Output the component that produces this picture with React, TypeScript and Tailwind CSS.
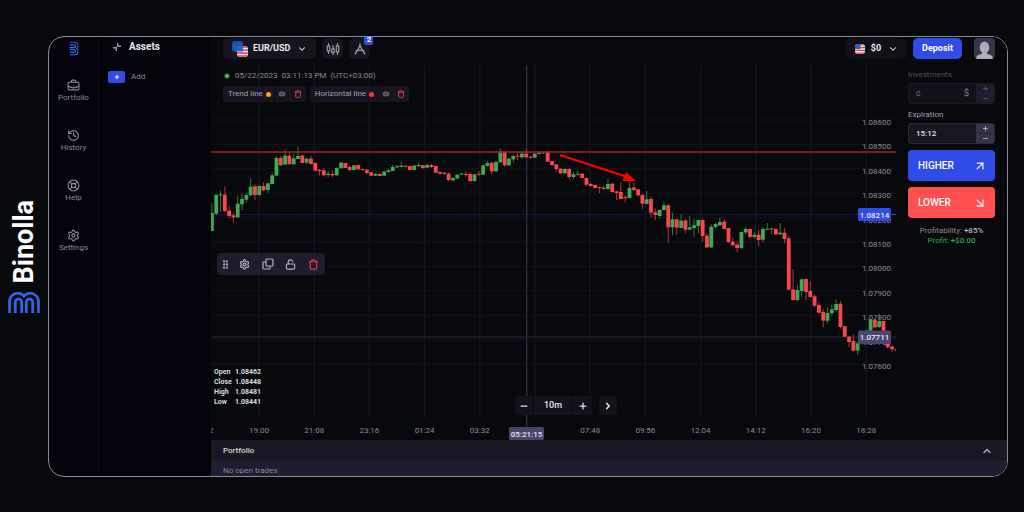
import { useState } from "react";
import {
  ArrowDownRight,
  ArrowUpRight,
  BriefcaseBusiness,
  ChevronDown,
  ChevronRight,
  ChevronUp,
  GripVertical,
  History,
  LifeBuoy,
  LockOpen,
  Minus,
  Plus,
  Settings,
  Trash,
} from "lucide-react";

type Bar = [open: number, close: number, high: number, low: number];

// Bars are stored per session as distances down from the session's own level,
// in thirds of a chart unit. A bar that closes further down than it opened is red.
const sessions: { level: number; bars: Bar[] }[] = [
  {
    level: 195,
    bars: [
      [303, 249, 220, 303], [251, 195, 190, 256], [196, 193, 182, 246], [194, 243, 169, 246],
      [242, 258, 228, 265], [256, 262, 250, 278], [262, 221, 197, 262], [223, 207, 190, 240],
      [209, 195, 190, 218], [196, 170, 146, 196], [169, 195, 163, 211], [195, 168, 166, 197],
      [168, 181, 157, 183], [180, 160, 158, 188], [162, 136, 128, 162], [137, 84, 80, 137],
      [84, 106, 78, 107], [104, 77, 58, 104], [77, 103, 64, 103], [103, 85, 72, 103],
      [87, 78, 49, 87], [76, 99, 76, 99], [98, 86, 84, 103], [86, 102, 78, 103],
      [99, 122, 97, 122], [119, 123, 118, 137], [121, 136, 113, 139], [135, 131, 122, 142],
      [132, 136, 121, 142], [136, 114, 112, 137], [115, 98, 96, 115], [99, 114, 98, 114],
      [111, 120, 107, 124], [120, 106, 104, 121], [105, 118, 103, 121], [117, 120, 116, 122],
      [119, 129, 118, 133], [127, 137, 126, 139], [137, 132, 130, 138], [132, 138, 130, 139],
      [137, 125, 122, 138], [126, 121, 116, 127], [123, 111, 104, 123], [112, 109, 104, 114],
      [111, 107, 95, 112],
    ],
  },
  {
    level: 225,
    bars: [
      [77, 80, 76, 82], [78, 90, 77, 92], [90, 77, 73, 91], [79, 75, 68, 80],
      [76, 84, 74, 87], [83, 75, 71, 84], [75, 81, 71, 84], [78, 98, 77, 99],
      [96, 101, 94, 103], [98, 102, 97, 104], [101, 120, 98, 123], [121, 114, 112, 124],
      [115, 104, 103, 119], [104, 101, 98, 105], [102, 105, 93, 110], [102, 123, 98, 125],
      [123, 103, 101, 124], [101, 104, 93, 108], [104, 76, 74, 105], [78, 69, 63, 79],
      [68, 94, 67, 102], [94, 66, 62, 96], [67, 35, 27, 67], [36, 76, 35, 81],
      [76, 56, 52, 77], [58, 48, 43, 68], [47, 50, 36, 60], [52, 41, 36, 55],
      [41, 52, 28, 53], [50, 53, 48, 57], [53, 41, 39, 54], [42, 38, 33, 43],
      [40, 37, 35, 42], [37, 65, 36, 65], [63, 75, 62, 78], [73, 87, 72, 97],
      [86, 100, 85, 102], [100, 87, 84, 101], [87, 111, 85, 119], [111, 103, 96, 117],
      [104, 101, 92, 108], [101, 114, 99, 115], [114, 134, 113, 137], [132, 138, 128, 140],
      [135, 144, 133, 145], [141, 144, 140, 160], [143, 147, 138, 149], [147, 132, 117, 149],
      [131, 156, 129, 158], [154, 159, 152, 181], [156, 177, 126, 178], [171, 174, 165, 188],
      [174, 144, 128, 175], [142, 150, 128, 152], [148, 166, 147, 170], [165, 191, 163, 207],
      [192, 178, 153, 193], [177, 218, 170, 231], [217, 225, 205, 240], [228, 210, 208, 235],
      [210, 196, 186, 212], [196, 262, 192, 310], [262, 238, 218, 286], [238, 263, 236, 284],
      [264, 242, 222, 264], [241, 269, 238, 280], [269, 262, 228, 270], [264, 256, 235, 290],
      [258, 240, 239, 280], [240, 288, 236, 306], [287, 322, 278, 324], [322, 260, 253, 324],
      [261, 252, 248, 265],
    ],
  },
  {
    level: 405,
    bars: [
      [76, 66, 53, 78], [65, 87, 58, 88], [84, 126, 83, 128], [125, 136, 113, 138],
      [134, 144, 124, 157], [144, 96, 95, 147], [97, 87, 81, 102], [87, 111, 85, 116],
      [111, 104, 96, 116], [104, 120, 90, 138], [119, 87, 82, 127], [89, 86, 69, 90],
      [85, 88, 84, 103], [87, 103, 85, 106], [103, 98, 69, 105], [98, 117, 84, 130],
      [115, 269, 108, 270], [268, 300, 207, 302], [300, 270, 254, 304], [273, 238, 236, 290],
      [237, 276, 236, 300], [273, 291, 243, 293], [289, 317, 283, 320], [315, 338, 305, 340],
      [336, 362, 328, 382], [362, 339, 322, 370], [340, 328, 314, 347], [330, 312, 298, 335],
      [311, 381, 303, 386], [379, 410, 377, 412], [410, 426, 408, 440], [423, 452, 403, 455],
      [452, 430, 424, 466], [432, 425, 420, 434], [430, 392, 388, 432], [392, 359, 356, 394],
      [359, 382, 355, 385], [381, 363, 340, 384], [363, 400, 362, 402], [400, 442, 398, 446],
      [440, 448, 436, 455], [448, 452, 446, 456],
    ],
  },
];

const candles = sessions.flatMap(({ level, bars }) =>
  bars.map((bar) => bar.map((v) => (v + level) / 3))
);

const prices = [
  "1.08600", "1.08500", "1.08400", "1.08300", "1.08200", "1.08100",
  "1.08000", "1.07900", "1.07800", "1.07700", "1.07600",
];

const times = [
  "16:52", "19:00", "21:08", "23:16", "01:24", "03:32", "", "07:48",
  "09:56", "12:04", "14:12", "16:20", "18:28",
];

const navItems = [
  { label: "Portfolio", icon: BriefcaseBusiness },
  { label: "History", icon: History },
  { label: "Help", icon: LifeBuoy },
  { label: "Settings", icon: Settings },
];

const drawings = [
  { label: "Trend line", dot: "bg-[#ff9f0a]" },
  { label: "Horizontal line", dot: "bg-[#ff3347]" },
];

const ohlc = [
  ["Open", "1.08462"],
  ["Close", "1.08448"],
  ["High", "1.08481"],
  ["Low", "1.08441"],
];

function Logo({ className }: { className: string }) {
  return (
    <svg viewBox="0 0 32 21" className={className} fill="none" stroke="#2b68ea" strokeWidth="2.700">
      <path d="M1.500 21V10C1.500 1.500 11.500-1.500 16 4.200C20.500-1.500 30.500 1.500 30.500 10V21" />
      <path d="M7.300 21V10.500a3.200 3.500 0 0 1 6.400 0V21" />
      <path d="M18.300 21V10.500a3.200 3.500 0 0 1 6.400 0V21" />
    </svg>
  );
}

function UsFlag({ className }: { className: string }) {
  return (
    <svg viewBox="0 0 12 12" className={className}>
      <rect width="12" height="12" fill="#f1f1f4" />
      <path d="M0 1h12M0 4.300h12M0 7.600h12M0 10.900h12" stroke="#e0394a" strokeWidth="1.700" />
      <rect width="6.500" height="6" fill="#2b5fc4" />
    </svg>
  );
}

function EuFlag({ className }: { className: string }) {
  return (
    <svg viewBox="0 0 12 12" className={className}>
      <rect width="12" height="12" fill="#0b56b3" />
      <circle cx="6" cy="6" r="3.200" fill="none" stroke="#5d8a7d" strokeDasharray="1 1" />
    </svg>
  );
}

function CollapseIcon() {
  return (
    <svg viewBox="0 0 10 10" className="size-2.5" fill="none" stroke="#9a99a8" strokeWidth="1.400">
      <path d="M1 5.700h3.300V9M9 4.300H5.700V1" />
    </svg>
  );
}

function CandlesIcon() {
  return (
    <svg viewBox="0 0 14 14" className="size-3.5" fill="none" stroke="#a3a2ae" strokeWidth="1.100">
      <path d="M2.500 1v3M2.500 9v3M7 3v4M7 10.500V13M11.500 1v3M11.500 10v3" />
      <rect x="1.300" y="4" width="2.400" height="5" />
      <rect x="5.800" y="7" width="2.400" height="3.500" />
      <rect x="10.300" y="4" width="2.400" height="6" />
    </svg>
  );
}

function CompassIcon() {
  return (
    <svg viewBox="0 0 14 14" className="size-3.5" fill="none" stroke="#a3a2ae" strokeWidth="1.300">
      <path d="M7 1.500v2M7 3.500L5.500 6.500L2 12.500M7 3.500L8.500 6.500L12 12.500" />
      <path d="M2.500 9.500c1.500-1.800 7.500-1.800 9 0" />
    </svg>
  );
}

function EyeIcon() {
  return (
    <svg viewBox="0 0 8 8" className="size-2">
      <ellipse cx="4" cy="4" rx="3.500" ry="2.500" fill="#5b5a69" />
      <circle cx="4" cy="4" r="1" fill="#33323f" />
    </svg>
  );
}

function DuplicateIcon() {
  return (
    <svg viewBox="0 0 12 12" className="size-3" fill="none" stroke="currentColor" strokeWidth="1.200">
      <rect x="4" y="1" width="7" height="7" rx="1" />
      <path d="M4 4H1.800a.8.8 0 0 0-.8.8v5.400a.8.8 0 0 0 .8.8h5.400a.8.8 0 0 0 .8-.8V8" />
    </svg>
  );
}

function Chart() {
  return (
    <svg viewBox="0 0 685 375" className="block h-full w-full font-['Roboto',sans-serif]">
      {prices.map((price, i) => (
        <path key={price} d={`M0 ${55 + i * 24.4}H685`} stroke="#12131e" />
      ))}
      {times.map((time, i) => (
        <path key={i} d={`M${i * 55.2 - 7.2} 0V353`} stroke="#13141f" strokeWidth="1.500" />
      ))}
      <path d="M0 149.500H685" stroke="#18225e" strokeDasharray="1.500 1" />
      <path d="M315.700 0V362" stroke="#2c2a42" strokeWidth="1.500" />
      <path d="M0 272H685" stroke="#2b2a42" />

      {prices.map((price, i) => (
        <text key={price} x="680" y={60 + i * 24.4} textAnchor="end" fontSize="8" fill="#8b8a96">
          {price}
        </text>
      ))}

      {candles.map(([open, close, high, low], i) => {
        const x = 0.9 + i * 4.305;
        const color = close > open ? "#fb464c" : "#41a855";
        return (
          <g key={i} fill={color}>
            <rect x={x - 0.5} y={high} width="1" height={low - high} opacity="0.7" />
            <rect x={x - 1.9} y={Math.min(open, close)} width="3.800" height={Math.abs(open - close)} />
          </g>
        );
      })}

      <path d="M0 87H685" stroke="#a81f2c" strokeWidth="1.800" opacity="0.75" />
      <path d="M349 90L415 111.500" stroke="#ff0000" strokeWidth="2" />
      <path d="M425 116L411.500 116L415 107Z" fill="#ff0000" />

      {times.map((time, i) => (
        <text key={i} x={i * 55.2 - 7.2} y="368" textAnchor="middle" fontSize="8" fill="#8b8a96">
          {time}
        </text>
      ))}

      <g fontSize="8" fontWeight="500" fill="#e9e9f0" textAnchor="middle">
        <path d="M680 149.500H685" stroke="#2f4be8" />
        <rect x="647" y="143" width="33" height="13" rx="1.500" fill="#2f4be8" />
        <text x="663.500" y="152.500">1.08214</text>
        <rect x="647" y="265.500" width="33" height="13.500" rx="1.500" fill="#48466a" />
        <text x="663.500" y="275">1.07711</text>
        <rect x="298" y="362" width="35" height="13" rx="1.500" fill="#48466a" />
        <text x="315.500" y="371.500">05:21:15</text>
      </g>
    </svg>
  );
}

function Stepper({ muted }: { muted?: boolean }) {
  return (
    <div className={`flex w-[18px] flex-col ${muted ? "bg-[#1d1c2b] text-[#55546a]" : "bg-[#35344a] text-[#b4b3c2]"}`}>
      <button aria-label="Increase" className="flex flex-1 items-center justify-center border-b border-[#262536]">
        <Plus className="size-[7px]" strokeWidth={3} />
      </button>
      <button aria-label="Decrease" className="flex flex-1 items-center justify-center">
        <Minus className="size-[7px]" strokeWidth={3} />
      </button>
    </div>
  );
}

function TradePanel() {
  const [amount, setAmount] = useState("0");
  const [expiration, setExpiration] = useState("15:12");

  return (
    <aside className="w-[111px] shrink-0 px-3 pt-[5px]">
      <label htmlFor="investments" className="block leading-[10px] text-[#54535f]">
        Investments
      </label>
      <div className="mt-[3px] flex h-[21px] overflow-hidden rounded-[3px] border border-[#1b1a27] bg-[#12121b]">
        <input
          id="investments"
          value={amount}
          onChange={(e) => setAmount(e.target.value)}
          className="w-0 min-w-0 flex-1 bg-transparent pl-[7px] text-[#777683] outline-none"
        />
        <span className="mr-[7px] self-center text-[9px] text-[#8b8a96]">$</span>
        <Stepper muted />
      </div>

      <label htmlFor="expiration" className="mt-1.5 block leading-[10px] text-[#a3a2ad]">
        Expiration
      </label>
      <div className="mt-[3px] flex h-[21px] overflow-hidden rounded-[3px] border border-[#2a293a] bg-[#181722]">
        <input
          id="expiration"
          value={expiration}
          onChange={(e) => setExpiration(e.target.value)}
          className="w-0 min-w-0 flex-1 bg-transparent pl-[7px] font-medium text-[#e4e4ea] outline-none"
        />
        <Stepper />
      </div>

      <button className="mt-1.5 flex h-[31px] w-full items-center justify-between rounded bg-[#2f4be8] px-2.5 text-[10px] font-medium text-white">
        HIGHER
        <ArrowUpRight className="-mr-0.5 size-3.5" />
      </button>
      <button className="mt-1.5 flex h-[31px] w-full items-center justify-between rounded bg-[#ff4f4f] px-2.5 text-[10px] font-medium text-white">
        LOWER
        <ArrowDownRight className="-mr-0.5 size-3.5" />
      </button>

      <div className="mt-2 text-center leading-[10px] whitespace-nowrap">
        <p className="text-[#8b8a96]">
          Profitability: <span className="font-medium text-[#b9b8c4]">+85%</span>
        </p>
        <p className="text-[#2fa844]">
          Profit: <span className="font-medium">+$0.00</span>
        </p>
      </div>
    </aside>
  );
}

export default function App() {
  const [step, setStep] = useState(10);

  return (
    <div className="flex min-h-screen bg-[#08090d] pt-9 pr-4 pb-[35px] font-['Roboto',sans-serif] text-[8px] text-[#8b8a96]">
      <div className="flex w-12 shrink-0 flex-col items-center justify-center gap-2">
        <span className="rotate-180 text-[27px] leading-8 font-bold text-white [writing-mode:vertical-rl]">
          Binolla
        </span>
        <Logo className="w-8" />
      </div>

      <div className="flex min-w-0 flex-1 overflow-hidden rounded-2xl border border-[#8a8a90] bg-[#03040b]">
        <nav className="flex w-[50px] shrink-0 flex-col items-center border-r border-[#0b0c15]">
          <a href="#home" aria-label="Home" className="flex h-[42px] items-start pt-[7px]">
            <Logo className="w-3.5 rotate-90" />
          </a>
          {navItems.map((item) => (
            <a key={item.label} href={`#${item.label.toLowerCase()}`} className="flex h-[50px] flex-col items-center">
              <item.icon className="size-[13px]" strokeWidth={2} />
              <span className="leading-3">{item.label}</span>
            </a>
          ))}
        </nav>

        <section className="w-28 shrink-0 pt-1">
          <div className="flex items-center gap-[7px] pl-[13px]">
            <CollapseIcon />
            <h2 className="text-[10px] leading-3 font-bold text-[#e9e9ee]">Assets</h2>
          </div>
          <div className="mt-[18px] flex items-center gap-1.5 pl-[9px]">
            <button aria-label="Add asset" className="flex h-3 w-[17px] items-center justify-center rounded-[2px] bg-[#2f4be8] text-white">
              <Plus className="size-1.5" strokeWidth={4} />
            </button>
            <span>Add</span>
          </div>
        </section>

        <main className="flex min-w-0 flex-1 flex-col bg-[#08090d]">
          <header className="flex h-7 items-start justify-between pt-px pr-3 pl-3">
            <div className="flex gap-1.5">
              <button className="flex h-[21px] items-center rounded-[5px] bg-[#15141f] px-[9px] text-[9px] font-bold text-[#ececf1]">
                <span className="relative mr-[5px] size-4">
                  <EuFlag className="size-[11px] rounded-[3px]" />
                  <UsFlag className="absolute right-0 bottom-0 size-[11px] rounded-[3px]" />
                </span>
                EUR/USD
                <ChevronDown className="ml-[7px] size-2.5" strokeWidth={2.5} />
              </button>
              <button aria-label="Chart type" className="flex size-[21px] items-center justify-center rounded-[5px] bg-[#15141f]">
                <CandlesIcon />
              </button>
              <button aria-label="Drawing tools" className="relative flex size-[21px] items-center justify-center rounded-[5px] bg-[#15141f]">
                <CompassIcon />
                <span className="absolute -top-1 -right-[3px] h-[11px] w-[9px] rounded-[2px] bg-[#2f4be8] leading-[11px] font-bold text-white">
                  2
                </span>
              </button>
            </div>
            <div className="flex gap-1.5">
              <button className="flex h-[21px] items-center rounded-[5px] bg-[#111119] px-[9px] text-[9px] font-bold text-[#ececf1]">
                <UsFlag className="mr-1.5 size-2.5 rounded-[3px]" />
                $0
                <ChevronDown className="ml-[7px] size-2.5" strokeWidth={2.5} />
              </button>
              <button className="h-[21px] rounded-[5px] bg-[#2f4be8] px-[9px] text-[9px] font-bold text-white">
                Deposit
              </button>
              <button aria-label="Profile" className="ml-1.5 size-[21px] overflow-hidden rounded-[4px] bg-[#35344a]">
                <svg viewBox="0 0 21 21" className="size-full" fill="#adacb9">
                  <ellipse cx="10.500" cy="9.500" rx="4.800" ry="6" />
                  <path d="M8 13h5v3c4 .600 6 2 6 5H2c0-3 2-4.400 6-5z" />
                </svg>
              </button>
            </div>
          </header>

          <div className="flex flex-1">
            <div className="relative min-w-0 flex-1">
              <Chart />

              <div className="absolute top-[5px] left-3">
                <p className="flex items-center gap-[5px] pl-px leading-3 text-[#8b8a96]">
                  <span className="size-1.5 rounded-full border border-[#123d1c] bg-[#4cc764]" />
                  05/22/2023&nbsp; 03:11:13 PM &nbsp;(UTC+03:00)
                </p>
                <div className="mt-1 flex gap-1">
                  {drawings.map((item) => (
                    <div key={item.label} className="flex h-4 items-center rounded-[3px] bg-[#161520]">
                      <span className="flex items-center gap-[3px] pr-[3px] pl-[5px] text-[#a3a2ad]">
                        {item.label}
                        <span className={`size-[5px] rounded-full ${item.dot}`} />
                      </span>
                      <button aria-label="Hide" className="flex h-full w-4 items-center justify-center border-l border-[#0c0c13]">
                        <EyeIcon />
                      </button>
                      <button aria-label="Remove" className="flex h-full w-4 items-center justify-center text-[#d83a45]">
                        <Trash className="size-2" strokeWidth={3} />
                      </button>
                    </div>
                  ))}
                </div>
              </div>

              <div className="absolute top-[188px] left-1.5 flex h-[22px] items-center rounded bg-[#1e1d2e] text-[#b4b3be]">
                <span className="flex w-4 justify-center">
                  <GripVertical className="size-[11px]" strokeWidth={3} />
                </span>
                <button aria-label="Drawing settings" className="flex w-[23px] justify-center">
                  <Settings className="size-[11px]" strokeWidth={2.5} />
                </button>
                <button aria-label="Duplicate" className="flex w-[23px] justify-center">
                  <DuplicateIcon />
                </button>
                <button aria-label="Unlock" className="flex w-[23px] justify-center">
                  <LockOpen className="size-[11px]" strokeWidth={2.5} />
                </button>
                <button aria-label="Delete" className="flex w-[23px] justify-center text-[#d83a45]">
                  <Trash className="size-[11px]" strokeWidth={2.5} />
                </button>
              </div>

              <table className="absolute bottom-[33px] left-[3px] text-[7px] leading-[10px] font-bold text-[#d9d9df]">
                <tbody>
                  {ohlc.map(([label, value]) => (
                    <tr key={label}>
                      <th className="w-[21px] p-0 text-left">{label}</th>
                      <td className="p-0">{value}</td>
                    </tr>
                  ))}
                </tbody>
              </table>

              <div className="absolute bottom-[25px] left-[304px] flex h-[19px] gap-px text-[#e4e4ea]">
                <button aria-label="Zoom out" onClick={() => setStep(Math.max(1, step - 5))} className="flex w-[18px] items-center justify-center rounded-l bg-[#14131d]">
                  <Minus className="size-2.5" strokeWidth={3} />
                </button>
                <span className="flex w-[38px] items-center justify-center bg-[#14131d] text-[9px] font-medium">
                  {step}m
                </span>
                <button aria-label="Zoom in" onClick={() => setStep(step + 5)} className="flex w-[19px] items-center justify-center rounded-r bg-[#14131d]">
                  <Plus className="size-2.5" strokeWidth={3} />
                </button>
                <button aria-label="Latest" className="ml-1.5 flex w-[18px] items-center justify-center rounded bg-[#14131d]">
                  <ChevronRight className="size-2.5" strokeWidth={4} />
                </button>
              </div>
            </div>

            <TradePanel />
          </div>

          <section className="h-9 shrink-0 overflow-hidden bg-[#1e1d31]">
            <div className="flex h-[21px] items-center justify-between bg-[#191823] pr-3.5 pl-3">
              <h3 className="font-medium text-[#d9d9df]">Portfolio</h3>
              <button aria-label="Expand portfolio" className="text-[#b4b3be]">
                <ChevronUp className="size-3" strokeWidth={2.5} />
              </button>
            </div>
            <p className="pt-1 pl-3 leading-3 text-[#85849a]">No open trades</p>
          </section>
        </main>
      </div>
    </div>
  );
}
